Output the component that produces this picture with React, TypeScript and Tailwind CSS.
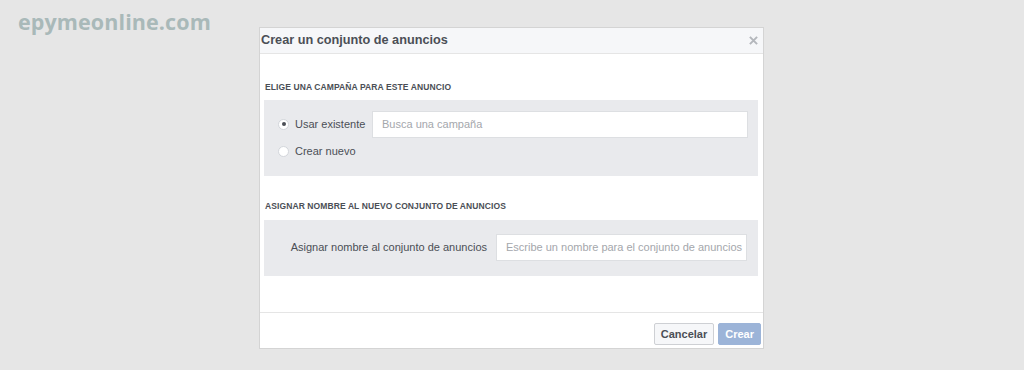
import React from 'react'

const Radio = ({ checked }: { checked?: boolean }) => (
  <span className="flex h-[11px] w-[11px] items-center justify-center rounded-full border border-[#d3d6db] bg-white">
    {checked && <span className="h-[4px] w-[4px] rounded-full bg-[#4b4f56]" />}
  </span>
)

export default function App() {
  return (
    <div
      className="relative h-[370px] w-[1024px] overflow-hidden bg-[#e6e6e6] pl-[259px] pt-[27px]"
      style={{ fontFamily: '"Liberation Sans", Arial, sans-serif' }}
    >
      <div
        className="absolute left-[18px] top-[6px] text-[21.5px] font-bold tracking-[0.1px] text-[#a9b9b9]"
        style={{ fontFamily: '"Open Sans", sans-serif' }}
      >
        epymeonline.com
      </div>

      <div className="flex h-[322px] w-[505px] flex-col border border-[#d4d4d4] bg-white">
        <div className="flex h-[26px] items-center justify-between border-b border-[#e5e5e5] bg-[#f6f7f9] pl-[1px] pr-[4px]">
          <span className="text-[12.7px] font-bold text-[#4b4f56]">Crear un conjunto de anuncios</span>
          <svg width="9" height="9" viewBox="0 0 10 10" className="mr-[1px]">
            <path d="M1 1 L9 9 M9 1 L1 9" stroke="#b4b7bc" strokeWidth="2.2" />
          </svg>
        </div>

        <div className="flex-1 pl-[4px] pr-[5px] pt-[27px]">
          <div className="mb-[6px] pl-[1px] text-[8.5px] font-bold tracking-[0.1px] text-[#4b4f56]">
            ELIGE UNA CAMPAÑA PARA ESTE ANUNCIO
          </div>
          <div className="h-[76px] bg-[#e9eaed] pl-[14px] pr-[10px] pt-[11px]">
            <div className="flex items-center">
              <Radio checked />
              <span className="ml-[6px] w-[77px] text-[11px] text-[#4b4f56]">Usar existente</span>
              <div className="flex h-[27px] flex-1 items-center border border-[#dddfe2] bg-white pl-[9px] text-[11px] text-[#a4a7ac]">
                Busca una campaña
              </div>
            </div>
            <div className="mt-[5px] flex items-center">
              <Radio />
              <span className="ml-[6px] text-[11px] text-[#4b4f56]">Crear nuevo</span>
            </div>
          </div>

          <div className="mb-[7px] mt-[24px] pl-[1px] text-[8.5px] font-bold tracking-[0.1px] text-[#4b4f56]">
            ASIGNAR NOMBRE AL NUEVO CONJUNTO DE ANUNCIOS
          </div>
          <div className="flex h-[56px] items-center justify-end bg-[#e9eaed] pr-[11px]">
            <span className="mr-[9px] text-[11px] text-[#4b4f56]">Asignar nombre al conjunto de anuncios</span>
            <div className="flex h-[27px] w-[251px] items-center border border-[#dddfe2] bg-white pl-[9px] text-[11px] text-[#a4a7ac]">
              Escribe un nombre para el conjunto de anuncios
            </div>
          </div>
        </div>

        <div className="flex h-[36px] items-start justify-end gap-[4px] border-t border-[#e5e5e5] pr-[2px] pt-[10px]">
          <button className="h-[22px] rounded-[2px] border border-[#ced0d4] bg-[#f6f7f9] px-[6px] text-[11px] font-bold text-[#4b4f56]">
            Cancelar
          </button>
          <button className="h-[22px] rounded-[2px] border border-[#9cb4d8] bg-[#9cb4d8] px-[6px] text-[11px] font-bold text-white">
            Crear
          </button>
        </div>
      </div>
    </div>
  )
}
